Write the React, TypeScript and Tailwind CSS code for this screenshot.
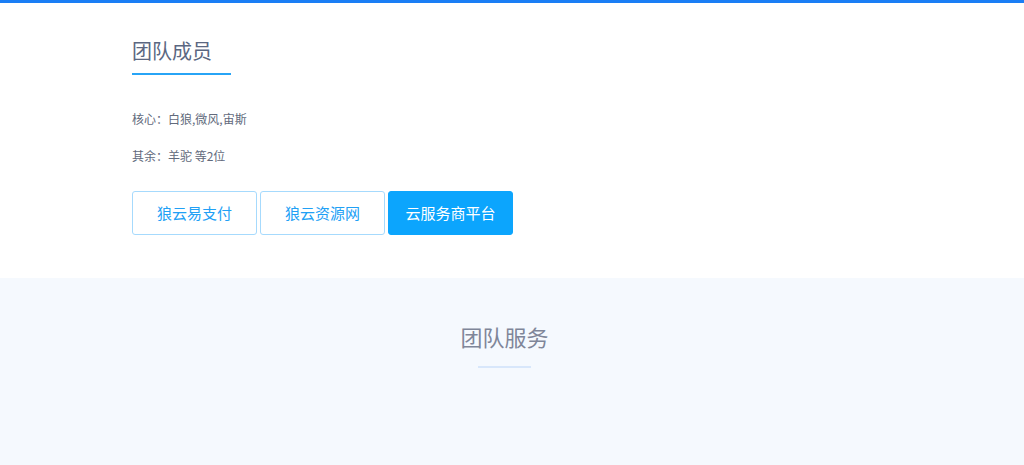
export default function App() {
  const links = [
    { label: '狼云易支付', active: false },
    { label: '狼云资源网', active: false },
    { label: '云服务商平台', active: true },
  ]

  return (
    <div className="min-h-[465px] bg-[#f5f9fe] font-['Noto_Sans_CJK_SC','Noto_Sans',sans-serif]">
      {/* Team members */}
      <section className="border-t-[3px] border-[#1a7ef5] bg-white">
        <div className="mx-auto w-[760px] pt-[33px] pb-[43px]">
          <h2 className="text-[20px] leading-[30px] text-[#5b6781]">团队成员</h2>
          <div className="mt-[7px] h-[2px] w-[99px] bg-[#27a4f6]" />
          <p className="mt-[35px] text-[12px] leading-[18px] text-[#626a7c]">核心：白狼,微风,宙斯</p>
          <p className="mt-[19px] text-[12px] leading-[18px] text-[#626a7c]">其余：羊驼 等2位</p>
          <div className="mt-[26px] flex gap-[3px]">
            {links.map((l) => (
              <a
                key={l.label}
                href="#"
                className={`flex h-[44px] w-[125px] items-center justify-center rounded-[3px] border text-[15px] ${
                  l.active
                    ? 'border-[#0ca5fd] bg-[#0ca5fd] text-white'
                    : 'border-[#a6dafd] bg-white text-[#21a0f5]'
                }`}
              >
                {l.label}
              </a>
            ))}
          </div>
        </div>
      </section>

      {/* Team services */}
      <section className="pt-[42px]">
        <div className="mx-auto w-[760px] pr-[15px] text-center">
          <h2 className="text-[22px] leading-[32px] text-[#7f8699]">团队服务</h2>
          <div className="mx-auto mt-[14px] h-[2px] w-[53px] bg-[#d8e7fb]" />
        </div>
      </section>
    </div>
  )
}
